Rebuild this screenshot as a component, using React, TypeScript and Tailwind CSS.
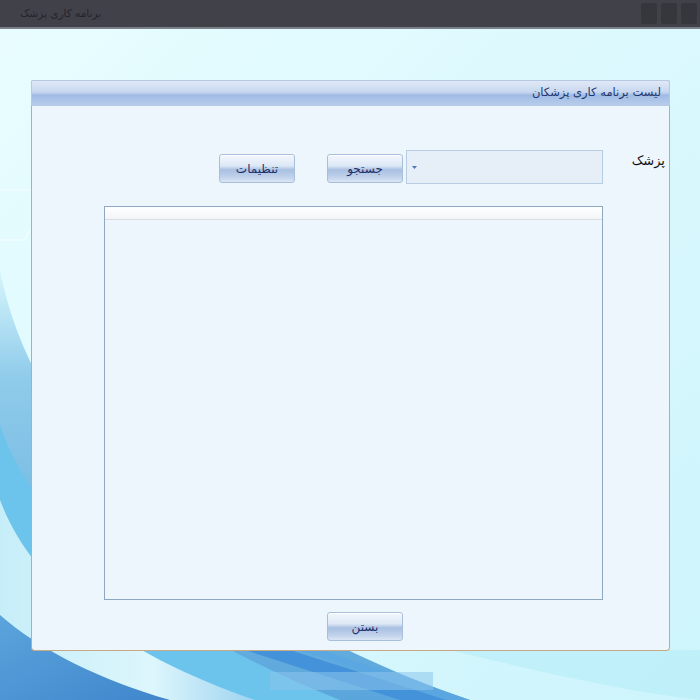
import React from "react";

const fa = { fontFamily: '"DejaVu Sans", "Noto Sans", sans-serif' };

const btn =
  "h-[29px] w-[76px] rounded-[3px] border border-[#a9bfd9] bg-[linear-gradient(to_bottom,#f3f7fd_0%,#dde8f6_40%,#a9c0e2_55%,#c3d4ec_85%,#dbe6f5_100%)] text-[12px] text-[#1d2f6a] shadow-[inset_0_1px_0_#ffffff]";

const Background = () => (
  <svg className="absolute inset-0" width="700" height="700" viewBox="0 0 700 700">
    <defs>
      <linearGradient id="sky" x1="0" y1="0" x2="1" y2="1">
        <stop offset="0" stopColor="#e9fdff" />
        <stop offset="1" stopColor="#cdf4fc" />
      </linearGradient>
      <linearGradient id="outer" x1="0" y1="0" x2="0" y2="1">
        <stop offset="0" stopColor="#d6f6fc" />
        <stop offset="0.25" stopColor="#8fcbea" />
        <stop offset="1" stopColor="#5aa6dc" />
      </linearGradient>
      <linearGradient id="light" x1="0" y1="0" x2="1" y2="0">
        <stop offset="0" stopColor="#c6eef9" />
        <stop offset="0.6" stopColor="#dcf6fc" />
        <stop offset="1" stopColor="#9ed3f0" />
      </linearGradient>
      <linearGradient id="dark" x1="0" y1="0" x2="1" y2="1">
        <stop offset="0" stopColor="#5ba4dc" />
        <stop offset="1" stopColor="#3f86cc" />
      </linearGradient>
    </defs>
    <rect width="700" height="700" fill="url(#sky)" />
    <path d="M0,190 L31,190" stroke="#ffffff" strokeWidth="1" opacity="0.7" />
    <path d="M0,240 L24,240 L31,228" stroke="#ffffff" fill="none" strokeWidth="1" opacity="0.7" />
    <path d="M0,270 C30,430 180,600 470,700 L0,700 Z" fill="url(#outer)" />
    <path d="M0,425 C30,520 140,620 340,700 L0,700 Z" fill="#6cc4ec" />
    <path d="M0,500 C30,580 110,650 255,700 L0,700 Z" fill="url(#light)" />
    <path d="M0,615 C40,650 100,680 170,700 L0,700 Z" fill="url(#dark)" />
    <path d="M245,650 L290,650 L446,700 L400,700 Z" fill="#3f8ed9" opacity="0.85" />
    <path d="M298,650 L322,650 L470,700 L448,700 Z" fill="#5aa6e2" opacity="0.8" />
    <path d="M450,650 C540,672 620,690 700,700 L700,650 Z" fill="#b6ecf9" opacity="0.6" />
    <rect x="270" y="672" width="163" height="18" fill="#8cc4ec" opacity="0.55" />
  </svg>
);

export default function App() {
  return (
    <div className="relative flex h-[700px] w-[700px] flex-col overflow-hidden" style={fa}>
      <Background />
      <div className="relative flex h-[29px] items-center justify-between border-b-2 border-[#7b8189] bg-[#41414a] px-[20px]">
        <span dir="rtl" className="text-[10.5px] text-[#24242a]">
          برنامه کاری پزشک
        </span>
        <div className="mr-[-17px] flex gap-[4px]">
          <div className="h-[21px] w-[16px] rounded-[2px] bg-[#36363d]" />
          <div className="h-[21px] w-[16px] rounded-[2px] bg-[#36363d]" />
          <div className="h-[21px] w-[16px] rounded-[2px] bg-[#36363d]" />
        </div>
      </div>

      <div
        dir="rtl"
        className="relative ml-[31px] mt-[51px] flex h-[571px] w-[639px] flex-col rounded-b-[4px] rounded-t-[2px] border border-t-0 border-[#c9a983] bg-[#eef6fd]"
      >
        <div className="-mx-px flex h-[26px] items-center rounded-t-[2px] border border-[#b7c9e2] bg-[linear-gradient(to_bottom,#dfe8f6_0%,#c9d8ef_45%,#9fbbe4_60%,#b8cdec_100%)] pr-[8px]">
          <span className="text-[11.5px] text-[#1f3771]">لیست برنامه کاری پزشکان</span>
        </div>

        <div className="mt-[44px] flex items-start">
          <div className="w-[66px] pr-[4px] pt-[1px] text-[13px] text-[#111111]">پزشک</div>
          <div className="flex h-[34px] w-[197px] items-center justify-end border border-[#b9cde2] bg-[#e6eef8] pl-[5px]">
            <svg width="5" height="3" viewBox="0 0 5 3">
              <path d="M0,0 L5,0 L2.5,3 Z" fill="#4a78b8" />
            </svg>
          </div>
          <button className={`${btn} mr-[3px] mt-[4px]`}>جستجو</button>
          <button className={`${btn} mr-[32px] mt-[4px]`}>تنظیمات</button>
        </div>

        <div className="mr-[66px] mt-[22px] flex h-[394px] w-[499px] flex-col border border-[#8fa8c2] bg-[#eef6fd]">
          <div className="h-[13px] border-b border-[#d9dde2] bg-[linear-gradient(to_bottom,#ffffff,#f3f5f8)]" />
        </div>

        <div className="mr-[266px] mt-[12px]">
          <button className={btn}>بستن</button>
        </div>
      </div>
    </div>
  );
}
